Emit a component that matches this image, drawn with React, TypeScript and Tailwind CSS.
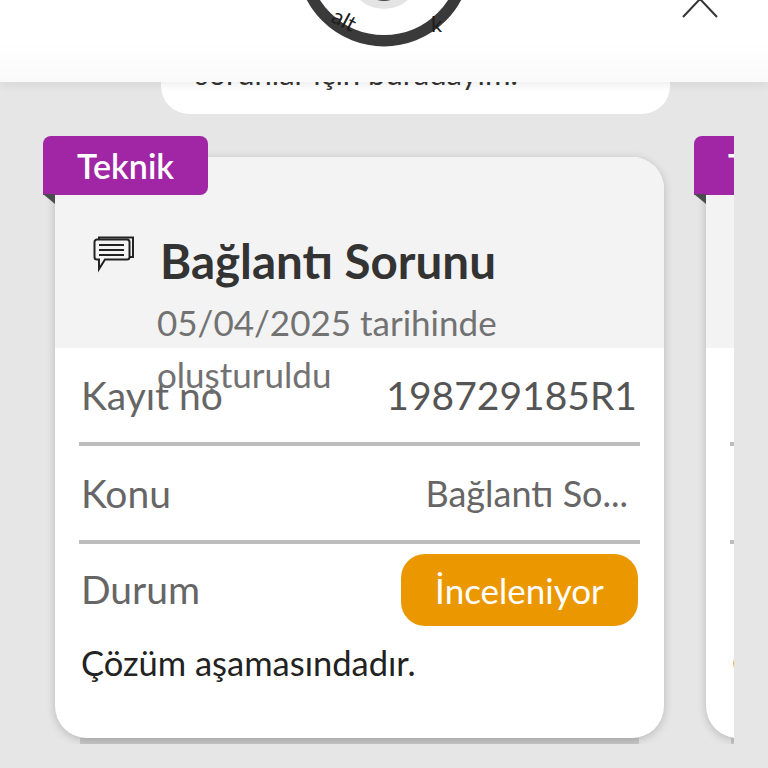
const font = { fontFamily: 'Lato, "Noto Sans", sans-serif' };

function Row({ label, value, muted }: { label: string; value: string; muted?: boolean }) {
  return (
    <div className="flex h-[98px] items-center justify-between border-b-4 border-[#bdbdbd] pl-[2px] pr-[3px]">
      <span className="text-[39px] text-[#666666]">{label}</span>
      <span className={muted ? "pr-[9px] text-[36px] text-[#666666]" : "text-[39px] text-[#555555]"}>{value}</span>
    </div>
  );
}

function TicketCard() {
  return (
    <div className="relative w-[609px] shrink-0">
      {/* ribbon with its folded corner */}
      <div className="absolute left-[-12px] top-[-21px] z-10 flex h-[59px] w-[165px] items-center justify-center rounded-t-[8px] rounded-br-[8px] bg-[#a026a5] text-[34px] font-semibold text-white">
        Teknik
      </div>
      <div className="absolute left-[-12px] top-[37px] z-10 h-[10px] w-[12px] bg-[#4a4d4e] [clip-path:polygon(0_0,100%_0,100%_100%)]" />

      <div className="relative h-[581px] overflow-hidden rounded-[32px] bg-white shadow-[0_2px_10px_rgba(0,0,0,0.2)]">
        <div className="flex h-[191px] gap-[25px] bg-[#f3f3f3] pl-[38px] pt-[78px]">
          <svg viewBox="0 0 42 38" className="h-[38px] w-[42px] shrink-0" fill="none" stroke="#222" strokeWidth="2">
            <path d="M6 4V2.500h34V22h-4" />
            <path d="M4 4.500h30a2.500 2.500 0 0 1 2.500 2.500v15a2.500 2.500 0 0 1-2.500 2.500H12L6 34v-9.500H4A2.500 2.500 0 0 1 1.500 22V7A2.500 2.500 0 0 1 4 4.500z" fill="#f3f3f3" />
            <path d="M6 10h25M6 15h25M6 20h25" />
          </svg>
          <div className="min-w-0">
            <h2 className="-mt-[2px] text-[47.500px] leading-[56px] font-bold whitespace-nowrap text-[#333333]">Bağlantı Sorunu</h2>
            <p className="relative z-10 -ml-[3px] mt-[7px] w-[370px] text-[35px] leading-[52px] text-[#727272]">
              05/04/2025 tarihinde oluşturuldu
            </p>
          </div>
        </div>
        <div className="px-[24px]">
          <Row label="Kayıt no" value="198729185R1" />
          <Row label="Konu" value="Bağlantı So..." muted />
          <div className="flex h-[92px] items-center justify-between pl-[2px] pr-[2px]">
            <span className="-mt-[1px] text-[39px] text-[#666666]">Durum</span>
            <span className="flex h-[72px] w-[237px] items-center justify-center rounded-[24px] bg-[#eb9700] text-[35px] text-white">
              İnceleniyor
            </span>
          </div>
          <p className="mt-[1px] pl-[2px] text-[34.500px] text-[#222222]">Çözüm aşamasındadır.</p>
        </div>
      </div>
      <div className="mx-[25px] h-[6px] bg-[#c8c8c8]" />
    </div>
  );
}

export default function App() {
  return (
    <div className="h-[768px] w-[768px] overflow-hidden bg-[#e6e6e6]" style={font}>
      <header className="relative z-20 h-[82px] overflow-hidden bg-gradient-to-b from-white from-50% to-[#fafafa] shadow-[0_3px_10px_rgba(0,0,0,0.07)]">
        <svg viewBox="0 0 768 82" className="absolute inset-0 h-[82px] w-[768px]" fill="none">
          <circle cx="384" cy="-41" r="81.700" stroke="#3a3a3a" strokeWidth="11.400" />
          <circle cx="384" cy="-27.500" r="36.500" fill="#e4e4e4" />
          <circle cx="384" cy="-22" r="23" fill="#444444" />
          {/* lettering running along the ring */}
          <text x="330" y="21" fontSize="22" fill="#1c1c1c" transform="rotate(28 330 21)">alt</text>
          <text x="431" y="32" fontSize="22" fill="#1c1c1c">k</text>
          <path d="M683 17 700 -1 717 17" stroke="#333" strokeWidth="2" />
        </svg>
      </header>

      <div className="-mt-[30px] ml-[161px] h-[62px] w-[509px] overflow-hidden rounded-b-[28px] bg-white pl-[34px] pt-[2px] text-[31px] leading-[38px] text-[#333333]">
        sorunlar için buradayım.
      </div>

      <div className="mt-[22px] flex w-[734px] gap-[42px] overflow-hidden pl-[55px] pt-[21px]">
        <TicketCard />
        <TicketCard />
      </div>
    </div>
  );
}
